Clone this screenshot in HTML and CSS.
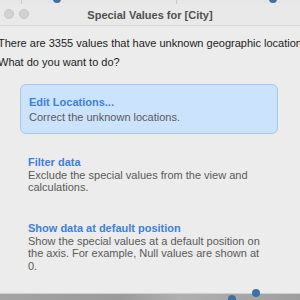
FILE: index.html
```html
<!DOCTYPE html>
<html lang="en">
<head>
    <meta charset="UTF-8">
    <meta name="viewport" content="width=device-width, initial-scale=1.0">
    <title>Special Values for [City]</title>
    <link rel="stylesheet" href="styles.css">
</head>
<body>
    <!-- Chart behind the dialog, top edge -->
    <div class="backdrop-top">
        <span class="grid-line line-1"></span>
        <span class="grid-line line-2"></span>
        <span class="mark mark-top-1"></span>
        <span class="mark mark-top-2"></span>
    </div>

    <!-- Dialog window -->
    <div class="window">
        <div class="title-bar">
            <div class="traffic-lights">
                <span class="light"></span>
                <span class="light"></span>
            </div>
            <div class="title">Special Values for [City]</div>
        </div>

        <div class="content">
            <p class="intro">There are 3355 values that have unknown geographic locations.</p>
            <p class="intro">What do you want to do?</p>

            <div class="options">
                <div class="option selected">
                    <div class="option-title">Edit Locations...</div>
                    <div class="option-text">Correct the unknown locations.</div>
                </div>
                <div class="option">
                    <div class="option-title">Filter data</div>
                    <div class="option-text">Exclude the special values from the view and calculations.</div>
                </div>
                <div class="option">
                    <div class="option-title">Show data at default position</div>
                    <div class="option-text">Show the special values at a default position on the axis. For example, Null values are shown at 0.</div>
                </div>
            </div>
        </div>
    </div>

    <!-- Chart behind the dialog, bottom edge -->
    <div class="backdrop-bottom">
        <span class="mark mark-bottom-1"></span>
        <span class="mark mark-bottom-2"></span>
    </div>
</body>
</html>
```

FILE: styles.css
```css
/* Basic styling */
body {
    margin: 0;
    width: 300px;
    height: 300px;
    overflow: hidden;
    font-family: "Liberation Sans", Arial, sans-serif;
    background-color: #e4e4e4;
}

.backdrop-top {
    position: relative;
    height: 4px;
    background-color: #e6e6e6;
    overflow: hidden;
}

.grid-line {
    position: absolute;
    top: 0;
    width: 1px;
    height: 4px;
    background-color: #c8c8c8;
}

.line-1 { left: 21px; }
.line-2 { left: 176px; }

.mark {
    position: absolute;
    width: 8px;
    height: 8px;
    border-radius: 50%;
    background-color: #3e6fa6;
}

.mark-top-1 { left: 53px; top: -5px; }
.mark-top-2 { left: 269px; top: -5px; }

.window {
    height: 289px;
    background-color: #ececec;
    overflow: hidden;
}

.title-bar {
    position: relative;
    height: 21px;
    display: flex;
    align-items: center;
    justify-content: center;
    background-color: #e9e9e9;
    border-bottom: 1px solid #d6d6d6;
}

.traffic-lights {
    position: absolute;
    left: 4px;
    top: 5px;
    display: flex;
    gap: 5px;
}

.light {
    width: 10px;
    height: 10px;
    border-radius: 50%;
    background-color: #d2d2d2;
    border: 0.5px solid #c6c6c6;
    box-sizing: border-box;
}

.title {
    font-size: 11px;
    font-weight: bold;
    color: #505050;
    padding-top: 1px;
}

.content {
    padding-top: 11px;
    margin-left: -2px;
}

.intro {
    margin: 0 0 6px 0;
    font-size: 11px;
    line-height: 13px;
    color: #222;
    white-space: nowrap;
}

.options {
    display: flex;
    flex-direction: column;
    margin: 15px 0 0 22px;
    width: 258px;
}

.option {
    padding: 0 8px;
}

.option + .option {
    margin-top: 27px;
}

.option.selected + .option {
    margin-top: 21px;
}

.option.selected {
    padding: 10px 8px 9px 8px;
    background-color: #cce3fd;
    border: 1px solid #a6c6f4;
    border-radius: 6px;
}

.option-title {
    font-size: 11px;
    font-weight: bold;
    line-height: 14px;
    color: #3f7fdc;
}

.option.selected .option-title {
    margin-bottom: 2px;
}

.option-text {
    font-size: 11px;
    line-height: 12.5px;
    color: #5a5a5a;
}

.backdrop-bottom {
    position: relative;
    height: 7px;
    background: linear-gradient(90deg, #a4a4a4 0%, #9a9a9a 40%, #b0b0b0 60%, #9e9e9e 100%);
    border-top: 1px solid #cfcfcf;
}

.mark-bottom-1 { left: 228px; top: 1px; }
.mark-bottom-2 { left: 252px; top: -5px; }
```
